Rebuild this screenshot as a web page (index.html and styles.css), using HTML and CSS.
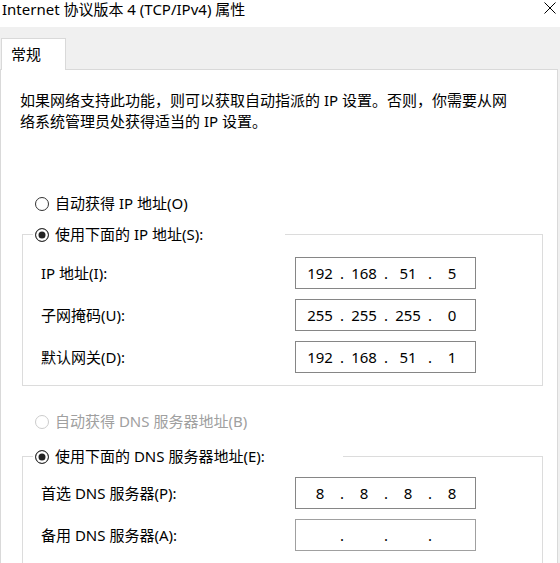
FILE: index.html
```html
<!DOCTYPE html>
<html lang="zh-CN">
<head>
<meta charset="utf-8">
<title>Internet 协议版本 4 (TCP/IPv4) 属性</title>
<link rel="stylesheet" href="styles.css">
</head>
<body>
<div class="titlebar">
  <span class="title">Internet 协议版本 4 (TCP/IPv4) 属性</span>
  <svg class="close" width="12" height="12" viewBox="0 0 12 12"><path d="M0.5 0.5L11.5 11.5M11.5 0.5L0.5 11.5" stroke="#000" stroke-width="1" fill="none"/></svg>
</div>
<div class="dialog">
  <div class="tabs"><div class="tab">常规</div></div>
  <div class="panel">
    <p class="intro">如果网络支持此功能，则可以获取自动指派的 IP 设置。否则，你需要从网<br>络系统管理员处获得适当的 IP 设置。</p>

    <div class="radio radio-auto-ip"><span class="dot"></span>自动获得 IP 地址(O)</div>

    <fieldset class="group group-ip">
      <legend class="legend legend-ip"><span class="radio"><span class="dot dot-on"></span>使用下面的 IP 地址(S):</span></legend>
      <div class="fields">
        <span class="field-label">IP 地址(I):</span>
        <div class="ipbox"><span class="oct">192</span><span class="sep">.</span><span class="oct">168</span><span class="sep">.</span><span class="oct">51</span><span class="sep">.</span><span class="oct">5</span></div>
        <span class="field-label">子网掩码(U):</span>
        <div class="ipbox"><span class="oct">255</span><span class="sep">.</span><span class="oct">255</span><span class="sep">.</span><span class="oct">255</span><span class="sep">.</span><span class="oct">0</span></div>
        <span class="field-label">默认网关(D):</span>
        <div class="ipbox"><span class="oct">192</span><span class="sep">.</span><span class="oct">168</span><span class="sep">.</span><span class="oct">51</span><span class="sep">.</span><span class="oct">1</span></div>
      </div>
    </fieldset>

    <div class="radio radio-auto-dns radio-disabled"><span class="dot"></span>自动获得 DNS 服务器地址(B)</div>

    <fieldset class="group group-dns">
      <legend class="legend legend-dns"><span class="radio"><span class="dot dot-on"></span>使用下面的 DNS 服务器地址(E):</span></legend>
      <div class="fields fields-dns">
        <span class="field-label">首选 DNS 服务器(P):</span>
        <div class="ipbox"><span class="oct">8</span><span class="sep">.</span><span class="oct">8</span><span class="sep">.</span><span class="oct">8</span><span class="sep">.</span><span class="oct">8</span></div>
        <span class="field-label">备用 DNS 服务器(A):</span>
        <div class="ipbox ipbox-empty"><span class="oct"></span><span class="sep">.</span><span class="oct"></span><span class="sep">.</span><span class="oct"></span><span class="sep">.</span><span class="oct"></span></div>
      </div>
    </fieldset>
  </div>
</div>
</body>
</html>
```

FILE: styles.css
```css
html, body {
  margin: 0;
  padding: 0;
}

body {
  background: #f0f0f0;
  font-family: "Noto Sans", "Noto Sans CJK SC", sans-serif;
  font-size: 15px;
  color: #000;
  width: 560px;
  height: 563px;
  overflow: hidden;
}

.titlebar {
  background: #fff;
  height: 27px;
  display: flex;
  justify-content: space-between;
  align-items: flex-start;
}

.title {
  padding-left: 2px;
  line-height: 18px;
  white-space: nowrap;
}

.close {
  display: block;
  margin-top: 2px;
  margin-right: 4px;
}

.tabs {
  display: flex;
  padding: 11px 0 0 1px;
}

.tab {
  position: relative;
  z-index: 1;
  box-sizing: border-box;
  width: 65px;
  height: 32px;
  margin-bottom: -1px;
  padding: 5px 0 0 9px;
  line-height: 20px;
  background: #fff;
  border: 1px solid #d9d9d9;
  border-bottom: none;
}

.panel {
  box-sizing: border-box;
  width: 558px;
  height: 520px;
  background: #fff;
  border: 1px solid #d9d9d9;
  display: flex;
  flex-direction: column;
  align-items: flex-start;
}

.intro {
  margin: 20px 0 0 19px;
  line-height: 21px;
}

.radio {
  display: flex;
  align-items: center;
  line-height: 21px;
  white-space: nowrap;
}

.radio-auto-ip {
  margin: 61px 0 0 34px;
}

.radio-auto-dns {
  margin: 25px 0 0 34px;
}

.radio-disabled {
  color: #a0a0a0;
}

.dot {
  box-sizing: border-box;
  width: 14px;
  height: 14px;
  border: 1px solid #333;
  border-radius: 50%;
  margin-right: 6px;
  flex: none;
  background: #fff;
}

.dot-on {
  background: #222;
  box-shadow: inset 0 0 0 2.5px #fff;
}

.radio-disabled .dot {
  border-color: #cccccc;
}

.group {
  box-sizing: border-box;
  width: 521px;
  min-width: 0;
  margin: 10px 0 0 21px;
  padding: 0;
  border: 1px solid #dcdcdc;
}

.group-dns {
  margin-top: 14px;
  height: 140px;
}

.legend {
  box-sizing: border-box;
  margin-left: 10px;
  padding: 0 0 0 2px;
  background: #fff;
}

.legend-ip {
  width: 252px;
}

.legend-dns {
  width: 310px;
}

.fields {
  display: grid;
  grid-template-columns: 254px 181px;
  grid-auto-rows: 32px;
  row-gap: 10px;
  align-items: center;
  padding: 12px 0 12px 18px;
}

.fields-dns {
  padding-top: 10px;
}

.field-label {
  line-height: 21px;
  white-space: nowrap;
}

.ipbox {
  box-sizing: border-box;
  height: 32px;
  border: 1px solid #868686;
  display: flex;
  align-items: center;
  padding: 0 5px 0 6px;
  font-family: "Noto Sans", sans-serif;
  line-height: 20px;
}

.ipbox-empty {
  border-color: #a0a0a0;
}

.oct {
  width: 36px;
  text-align: center;
}

.sep {
  width: 8px;
  text-align: center;
}
```
